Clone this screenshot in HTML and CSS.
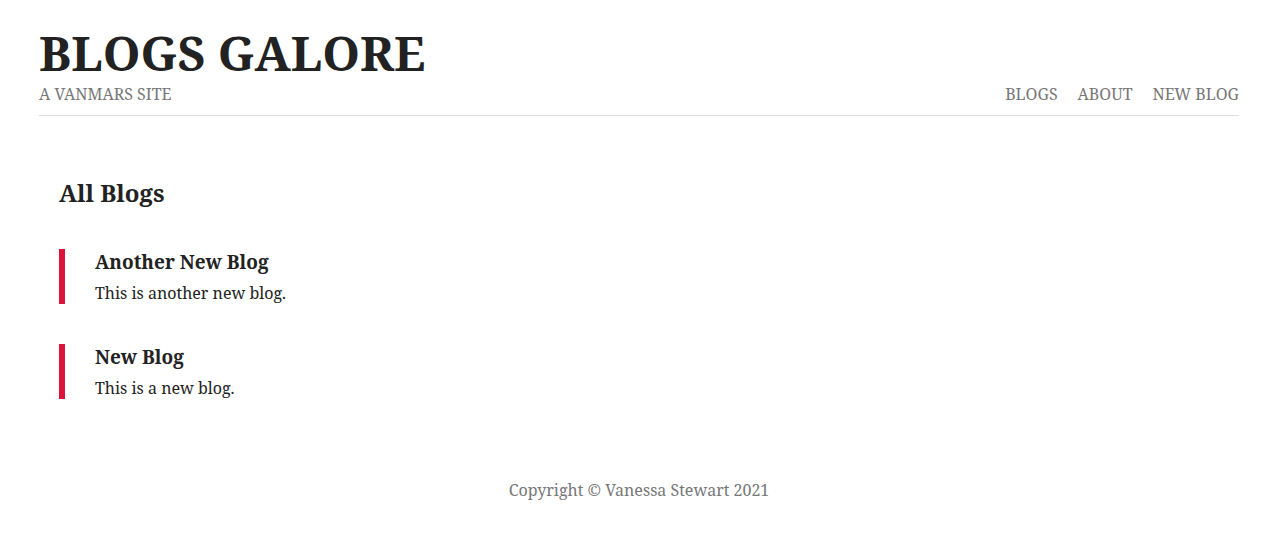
FILE: index.html
```html
<!DOCTYPE html>
<html lang="en">
<head>
<meta charset="utf-8">
<title>Blogs Galore</title>
<link rel="stylesheet" href="styles.css">
</head>
<body>
<div class="page">
  <header class="site-header">
    <h1 class="brand">BLOGS GALORE</h1>
    <div class="header-row">
      <span class="tagline">A VANMARS SITE</span>
      <nav class="nav">
        <a href="#">BLOGS</a>
        <a href="#">ABOUT</a>
        <a href="#">NEW BLOG</a>
      </nav>
    </div>
  </header>
  <main class="content">
    <h2 class="section-title">All Blogs</h2>
    <div class="blog-list">
      <article class="blog-card">
        <h3 class="blog-title">Another New Blog</h3>
        <p class="blog-snippet">This is another new blog.</p>
      </article>
      <article class="blog-card">
        <h3 class="blog-title">New Blog</h3>
        <p class="blog-snippet">This is a new blog.</p>
      </article>
    </div>
  </main>
  <footer class="site-footer">Copyright © Vanessa Stewart 2021</footer>
</div>
</body>
</html>
```
FILE: styles.css
```css
* { box-sizing: border-box; }
body {
  margin: 0;
  padding-left: 4px;
  font-family: "Noto Serif", "DejaVu Serif", "Liberation Serif", serif;
  color: #222;
  background: #fff;
}
.page {
  max-width: 1200px;
  margin: 0 auto;
}
.site-header {
  padding-top: 28px;
  border-bottom: 1px solid #ddd;
}
.brand {
  margin: 0;
  font-size: 48px;
  line-height: 50px;
  font-weight: 700;
  color: #222;
}
.header-row {
  display: flex;
  justify-content: space-between;
  align-items: baseline;
  margin-top: 4px;
  padding-bottom: 9px;
}
.tagline, .nav a {
  font-size: 16px;
  line-height: 24px;
  color: #777;
  text-decoration: none;
}
.nav { display: flex; gap: 20px; }
.content {
  padding: 61px 20px 0;
}
.section-title {
  margin: 0;
  font-size: 24px;
  line-height: 32px;
  font-weight: 700;
}
.blog-list {
  display: flex;
  flex-direction: column;
  gap: 40px;
  margin-top: 40px;
}
.blog-card {
  border-left: 6px solid crimson;
  padding-left: 30px;
}
.blog-title {
  margin: 0;
  font-size: 19px;
  line-height: 27px;
  font-weight: 700;
}
.blog-snippet {
  margin: 7px 0 0;
  font-size: 16px;
  line-height: 21px;
}
.site-footer {
  text-align: center;
  color: #777;
  font-size: 16px;
  padding-top: 80px;
}
```
